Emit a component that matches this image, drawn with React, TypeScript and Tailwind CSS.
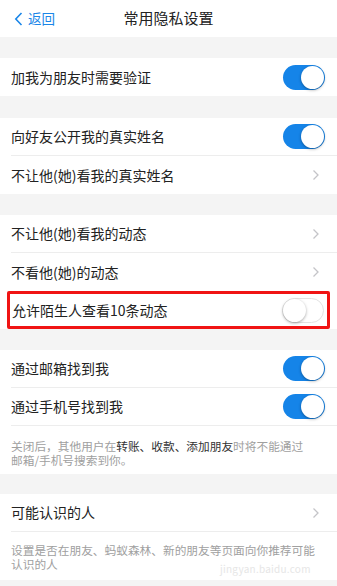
import React from 'react';

const font = { fontFamily: '"Noto Sans CJK SC", "Liberation Sans", sans-serif' };

function Toggle({ on }: { on: boolean }) {
  return on ? (
    <div className="w-[42px] h-[25px] rounded-full bg-[#1584e8] flex items-center justify-end pr-[1px]">
      <div className="w-[23px] h-[23px] rounded-full bg-white shadow-[0_1px_3px_rgba(0,0,0,0.35)]" />
    </div>
  ) : (
    <div className="w-[42px] h-[25px] rounded-full bg-white border border-[#e3e3e3] flex items-center justify-start">
      <div className="w-[23px] h-[23px] rounded-full bg-white shadow-[0_1px_3px_rgba(0,0,0,0.35)]" />
    </div>
  );
}

function Chevron() {
  return (
    <svg width="8" height="12" viewBox="0 0 8 12" className="mr-[5px]">
      <path d="M1.5 1.5 L6 6 L1.5 10.5" fill="none" stroke="#c4c4c8" strokeWidth="1.3" />
    </svg>
  );
}

function Row({
  label,
  right,
  divider,
}: {
  label: string;
  right: React.ReactNode;
  divider?: boolean;
}) {
  return (
    <div className="bg-white pl-[11px]">
      <div
        className={`h-[38px] flex items-center justify-between pr-[12px] ${
          divider ? 'border-b border-[#ededed]' : ''
        }`}
      >
        <span className="text-[14px] text-[#222]">{label}</span>
        {right}
      </div>
    </div>
  );
}

function Gap({ h }: { h: string }) {
  return <div className={h} />;
}

export default function App() {
  return (
    <div className="w-[337px] h-[586px] bg-[#f4f4f4] overflow-hidden relative" style={font}>
      {/* header */}
      <div className="h-[37px] bg-white flex items-center relative">
        <div className="flex items-center pl-[14px] text-[#1a86e8]">
          <svg width="9" height="14" viewBox="0 0 9 14">
            <path d="M7.5 1 L1.8 7 L7.5 13" fill="none" stroke="#1a86e8" strokeWidth="1.6" />
          </svg>
          <span className="ml-[5px] text-[13.5px]">返回</span>
        </div>
        <div className="absolute left-0 right-0 text-center text-[15px] text-[#222] pointer-events-none">
          常用隐私设置
        </div>
      </div>

      <Gap h="h-[21px]" />
      <Row label="加我为朋友时需要验证" right={<Toggle on />} />

      <Gap h="h-[22px]" />
      <Row label="向好友公开我的真实姓名" right={<Toggle on />} divider />
      <Row label="不让他(她)看我的真实姓名" right={<Chevron />} />

      <Gap h="h-[21px]" />
      <Row label="不让他(她)看我的动态" right={<Chevron />} divider />
      <Row label="不看他(她)的动态" right={<Chevron />} />
      <div className="bg-white px-[7px]">
        <div className="h-[38px] border-[3px] border-[#f01414] rounded-[2px] flex items-center justify-between pl-[2px] pr-[3px]">
          <span className="text-[14px] text-[#222]">允许陌生人查看10条动态</span>
          <Toggle on={false} />
        </div>
      </div>

      <Gap h="h-[21px]" />
      <Row label="通过邮箱找到我" right={<Toggle on />} divider />
      <Row label="通过手机号找到我" right={<Toggle on />} divider />
      <div className="bg-white h-[48px] px-[11px] pt-[13px] text-[11.7px] leading-[14px] text-[#a0a0a0]">
        <p>
          关闭后，其他用户在<span className="text-[#333]">转账、收款、添加朋友</span>时将不能通过
        </p>
        <p>邮箱/手机号搜索到你。</p>
      </div>

      <Gap h="h-[20px]" />
      <Row label="可能认识的人" right={<Chevron />} divider />
      <div className="bg-white h-[48px] px-[11px] pt-[11px] text-[11.7px] leading-[14px] text-[#a0a0a0]">
        <p>设置是否在朋友、蚂蚁森林、新的朋友等页面向你推荐可能</p>
        <p>认识的人</p>
      </div>

      <div className="absolute left-[220px] top-[563px] text-[10px] leading-[12px] text-[#e6e6e6] tracking-wide">
        jingyan.baidu.com
      </div>
    </div>
  );
}
